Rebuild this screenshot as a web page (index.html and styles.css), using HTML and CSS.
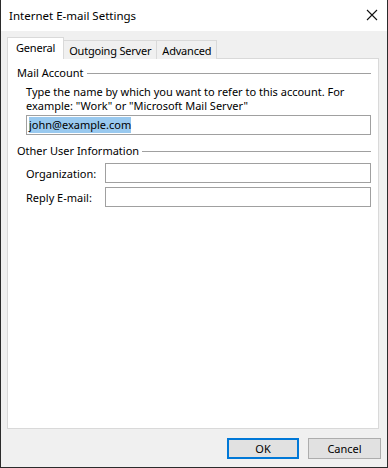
FILE: index.html
```html
<!DOCTYPE html>
<html lang="en">
<head>
    <meta charset="UTF-8">
    <meta name="viewport" content="width=device-width, initial-scale=1.0">
    <title>Internet E-mail Settings</title>
    <link rel="stylesheet" href="styles.css">
</head>
<body>
    <div class="window">
        <div class="titlebar">
            <span class="title">Internet E-mail Settings</span>
            <svg class="close" width="12" height="12" viewBox="0 0 12 12">
                <path d="M1 1 L11 11 M11 1 L1 11" stroke="#111" stroke-width="1.1" fill="none"/>
            </svg>
        </div>
        <div class="content">
            <div class="tabs">
                <div class="tab active">General</div>
                <div class="tab">Outgoing Server</div>
                <div class="tab">Advanced</div>
            </div>
            <div class="panel">
                <div class="group-head">
                    <span>Mail Account</span>
                    <span class="rule"></span>
                </div>
                <div class="group-body">
                    <p class="hint">Type the name by which you want to refer to this account. For<br>example: "Work" or "Microsoft Mail Server"</p>
                    <div class="field"><span class="sel">john@example.com</span></div>
                </div>

                <div class="group-head second">
                    <span>Other User Information</span>
                    <span class="rule"></span>
                </div>
                <div class="group-body">
                    <div class="row">
                        <label>Organization:</label>
                        <div class="field"></div>
                    </div>
                    <div class="row">
                        <label>Reply E-mail:</label>
                        <div class="field"></div>
                    </div>
                </div>
            </div>
            <div class="buttons">
                <button class="btn default">OK</button>
                <button class="btn">Cancel</button>
            </div>
        </div>
    </div>
</body>
</html>
```

FILE: styles.css
```css
body {
    margin: 0;
    font-family: "Noto Sans", sans-serif;
    font-size: 11px;
    color: #000;
    background: #fff;
}
.window {
    width: 388px;
    height: 468px;
    box-sizing: border-box;
    border: 1px solid #2b2b2b;
    border-top: none;
    display: flex;
    flex-direction: column;
}
.titlebar {
    height: 31px;
    background: #fff;
    display: flex;
    align-items: center;
    justify-content: space-between;
    padding: 0 9px 0 8px;
    flex-shrink: 0;
}
.title {
    font-size: 11.5px;
    margin-top: -1px;
}
.close {
    margin-top: -2px;
}
.content {
    flex: 1;
    background: #f0f0f0;
    padding: 7px 8px 8px 6px;
    display: flex;
    flex-direction: column;
}
.tabs {
    display: flex;
    align-items: flex-end;
    height: 21px;
    margin-bottom: -1px;
    position: relative;
    z-index: 1;
}
.tab {
    height: 19px;
    line-height: 19px;
    padding: 0 5px;
    letter-spacing: -0.2px;
    border: 1px solid #d9d9d9;
    border-bottom: none;
    border-left: none;
    box-sizing: border-box;
    background: #f0f0f0;
}
.tab.active {
    height: 22px;
    line-height: 19px;
    background: #fff;
    border-left: 1px solid #d9d9d9;
    padding: 0 8px;
}
.panel {
    flex: 1;
    background: #fff;
    border: 1px solid #d9d9d9;
    padding: 6px 7px 0 9px;
}
.group-head {
    display: flex;
    align-items: center;
    height: 15px;
}
.group-head .rule {
    flex: 1;
    border-top: 1px solid #a0a0a0;
    margin-left: 3px;
    margin-top: 1px;
}
.group-head.second {
    margin-top: 8px;
}
.group-body {
    padding-left: 9px;
}
.hint {
    margin: 5px 0 2px 0;
    line-height: 14px;
}
.field {
    height: 20px;
    box-sizing: border-box;
    border: 1px solid #a0a0a0;
    background: #fff;
    padding: 1px 0 0 2px;
    line-height: 16px;
    flex: 1;
}
.sel {
    background: #99c9ef;
    display: inline-block;
    height: 16px;
}
.row {
    display: flex;
    align-items: center;
    margin-top: 4px;
}
.row:first-child {
    margin-top: 5px;
}
.row label {
    width: 79px;
}
.buttons {
    display: flex;
    justify-content: flex-end;
    gap: 9px;
    margin-top: 9px;
    margin-right: -2px;
}
.btn {
    width: 73px;
    height: 21px;
    border: 1px solid #adadad;
    background: #e1e1e1;
    font-family: "Noto Sans", sans-serif;
    font-size: 11px;
    padding: 0;
}
.btn.default {
    border: 2px solid #0078d7;
    width: 72px;
}
```
